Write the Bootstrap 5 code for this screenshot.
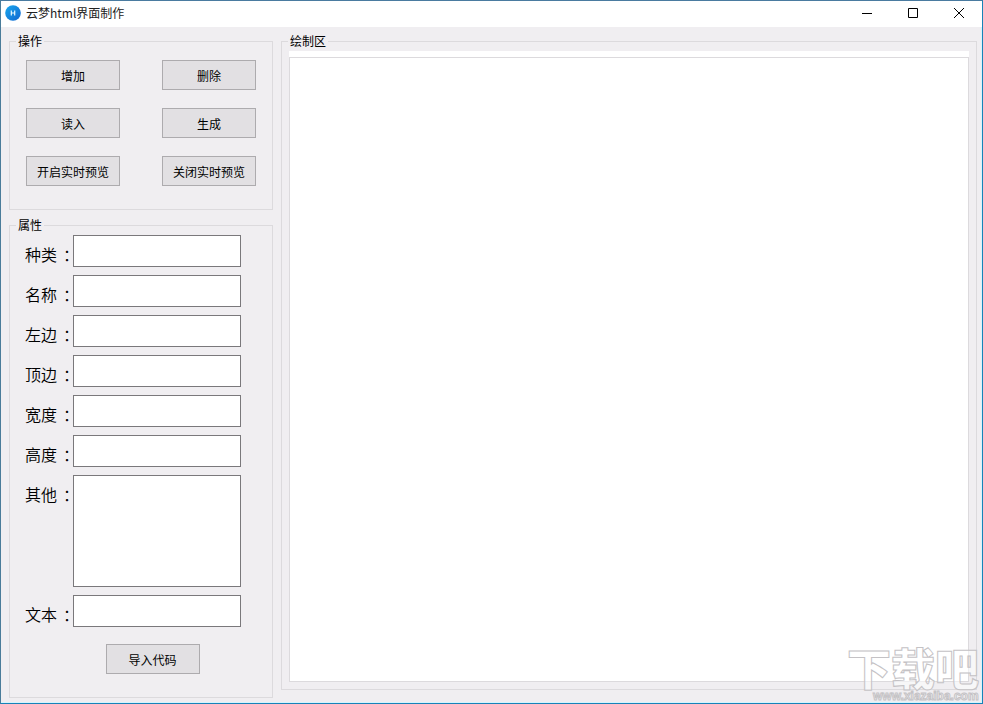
<!DOCTYPE html>
<html lang="zh-CN">
<head>
<meta charset="utf-8">
<meta name="viewport" content="width=device-width, initial-scale=1">
<title>云梦html界面制作</title>
<link href="https://cdn.jsdelivr.net/npm/bootstrap@5.3.0/dist/css/bootstrap.min.css" rel="stylesheet">
<style>
body{font-family:"Noto Sans CJK SC",sans-serif;font-size:12px;line-height:16px;color:#000;background:#f0eef1}
.app-window{border:1px solid #1883b8;border-top-color:#4a7ba0;border-left-color:#4a7c9a}
.title-bar{height:26px;padding-bottom:2px;background:#fff;color:#222}
.app-icon{margin:0 5px 0 4px}
.win-btn{width:46px;height:26px;padding:0;border:0;background:none;line-height:0}
.work-area{padding:6px 5px 5px 8px;gap:8px;box-shadow:inset -1px -1px #d5f4fd}
.side{width:264px;gap:7px}
.group-box{border:1px solid #dcdadd;min-width:0}
.group-box legend{float:none;width:auto;margin:0 0 0 6px;padding:0 2px;font-size:12px;line-height:16px}
.actions{padding:11px 16px 23px;row-gap:18px}
.tool-btn{width:94px;height:30px;padding:2px 0 0;border:1px solid #adabae;border-radius:0;background:#e2e0e3;color:#000;font-size:12px;line-height:16px}
.tool-btn:hover{background:#e5f1fb;border-color:#0078d7}
.fields{padding:2px 31px 23px 15px;gap:8px}
.field-label{width:48px;flex:none;font-size:16px;font-weight:350;line-height:24px;padding-top:7px;white-space:nowrap}
.colon{padding-left:6px;margin-right:-6px}
.field-input{height:32px;padding:2px 4px;border:1px solid #7a787b;border-radius:0;font-size:16px;background:#fff;min-width:0}
.field-area{height:112px;resize:none}
.import-btn{margin:9px 0 0 39px}
.draw-box{margin-bottom:8px}
.draw-pad{padding:2px 7px 7px 7px}
.draw-area{border:1px solid #dcdadd;background:#fff}
.draw-strip{height:6px;background:#fff}
.watermark{right:0;bottom:0;pointer-events:none}
</style>
</head>
<body>
<div class="app-window d-flex flex-column min-vh-100 position-relative overflow-hidden">
  <header class="title-bar d-flex align-items-center">
    <svg class="app-icon" width="16" height="16" viewBox="0 0 16 16" aria-hidden="true">
      <defs><linearGradient id="ball" x1="0" y1="0" x2="1" y2="1"><stop offset="0" stop-color="#18a8ee"/><stop offset="1" stop-color="#1266d0"/></linearGradient></defs>
      <circle cx="8" cy="8" r="7.8" fill="url(#ball)"/>
      <path d="M6.3 5.5v5M9.7 5.5v5M6 8h4" stroke="#e8f7ff" stroke-width="1.2" fill="none"/>
    </svg>
    <span>云梦html界面制作</span>
    <div class="ms-auto d-flex">
      <button class="win-btn" type="button" aria-label="最小化"><svg width="10" height="10"><path d="M0 5.5h10" stroke="#000"/></svg></button>
      <button class="win-btn" type="button" aria-label="最大化"><svg width="10" height="10"><path d="M.5.5h9v9h-9z" stroke="#000" fill="none"/></svg></button>
      <button class="win-btn" type="button" aria-label="关闭"><svg width="10" height="10"><path d="M0 0l10 10M10 0L0 10" stroke="#000" fill="none"/></svg></button>
    </div>
  </header>
  <main class="work-area d-flex flex-grow-1">
    <div class="side d-flex flex-column flex-shrink-0">
      <fieldset class="group-box">
        <legend>操作</legend>
        <div class="actions d-flex flex-wrap justify-content-between">
          <button class="btn tool-btn" type="button">增加</button>
          <button class="btn tool-btn" type="button">删除</button>
          <button class="btn tool-btn" type="button">读入</button>
          <button class="btn tool-btn" type="button">生成</button>
          <button class="btn tool-btn" type="button">开启实时预览</button>
          <button class="btn tool-btn" type="button">关闭实时预览</button>
        </div>
      </fieldset>
      <fieldset class="group-box flex-grow-1">
        <legend>属性</legend>
        <div class="fields d-flex flex-column">
          <div class="d-flex"><label class="field-label" for="kind">种类<span class="colon">：</span></label><input class="form-control field-input" id="kind" type="text"></div>
          <div class="d-flex"><label class="field-label" for="name">名称<span class="colon">：</span></label><input class="form-control field-input" id="name" type="text"></div>
          <div class="d-flex"><label class="field-label" for="left">左边<span class="colon">：</span></label><input class="form-control field-input" id="left" type="text"></div>
          <div class="d-flex"><label class="field-label" for="top">顶边<span class="colon">：</span></label><input class="form-control field-input" id="top" type="text"></div>
          <div class="d-flex"><label class="field-label" for="width">宽度<span class="colon">：</span></label><input class="form-control field-input" id="width" type="text"></div>
          <div class="d-flex"><label class="field-label" for="height">高度<span class="colon">：</span></label><input class="form-control field-input" id="height" type="text"></div>
          <div class="d-flex"><label class="field-label" for="other">其他<span class="colon">：</span></label><textarea class="form-control field-input field-area" id="other"></textarea></div>
          <div class="d-flex"><label class="field-label" for="text">文本<span class="colon">：</span></label><input class="form-control field-input" id="text" type="text"></div>
          <button class="btn tool-btn import-btn align-self-center" type="button">导入代码</button>
        </div>
      </fieldset>
    </div>
    <fieldset class="group-box draw-box d-flex flex-column flex-grow-1">
      <legend>绘制区</legend>
      <div class="draw-pad d-flex flex-column flex-grow-1">
        <div class="draw-strip"></div>
        <div class="draw-area flex-grow-1"></div>
      </div>
    </fieldset>
  </main>
  <svg class="watermark position-absolute" width="136" height="70" viewBox="0 0 136 70" aria-hidden="true">
    <text x="1" y="53" font-family="Noto Sans CJK SC, sans-serif" font-size="44" font-weight="900" fill="#fff" fill-opacity=".55" stroke="#c4c2c5" stroke-width="1">下载吧</text>
    <text x="27" y="67" font-family="Liberation Sans, sans-serif" font-size="12" font-weight="700" fill="#fff" fill-opacity=".8" stroke="#c4c2c5" stroke-width="1">www.xiazaiba.com</text>
  </svg>
</div>
<script src="https://cdn.jsdelivr.net/npm/bootstrap@5.3.0/dist/js/bootstrap.bundle.min.js"></script>
</body>
</html>
